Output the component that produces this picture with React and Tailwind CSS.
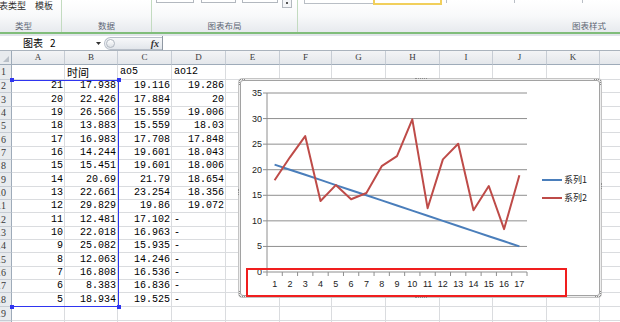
import React from 'react'

// Column widths in px, left to right, after the 12px row header.
const COLS = [
  { k: 'A', w: 'w-[53px]' },
  { k: 'B', w: 'w-[53px]' },
  { k: 'C', w: 'w-[54px]' },
  { k: 'D', w: 'w-[54px]' },
  { k: 'E', w: 'w-[54px]' },
  { k: 'F', w: 'w-[52px]' },
  { k: 'G', w: 'w-[54px]' },
  { k: 'H', w: 'w-[54px]' },
  { k: 'I', w: 'w-[53px]' },
  { k: 'J', w: 'w-[54px]' },
  { k: 'K', w: 'w-[53px]' },
  { k: '', w: 'w-[54px]' }, // L, label is off screen
]

const SERIES1 = [21, 20, 19, 18, 17, 16, 15, 14, 13, 12, 11, 10, 9, 8, 7, 6, 5]
const TIMES = ['17.938', '22.426', '26.566', '13.883', '16.983', '14.244', '15.451', '20.69', '22.661',
  '29.829', '12.481', '22.018', '25.082', '12.063', '16.808', '8.383', '18.934']
const AO5 = ['19.116', '17.884', '15.559', '15.559', '17.708', '19.601', '19.601', '21.79', '23.254',
  '19.86', '17.102', '16.963', '15.935', '14.246', '16.536', '16.836', '19.525']
const AO12 = ['19.286', '20', '19.006', '18.03', '17.848', '18.043', '18.006', '18.654', '18.356', '19.072']

function buildRows() {
  const rows = [{ n: 1, h: 'h-[15px]', cells: [null, { t: '时间', cjk: true }, { t: 'ao5' }, { t: 'ao12' }] }]
  SERIES1.forEach((a, i) => {
    rows.push({
      n: i + 2,
      h: i % 3 === 1 ? 'h-[14px]' : 'h-[13px]',
      cells: [
        { t: String(a), num: true },
        { t: TIMES[i], num: true },
        { t: AO5[i], num: true },
        AO12[i] ? { t: AO12[i], num: true } : { t: '-' },
      ],
    })
  })
  rows.push({ n: 19, h: 'h-[14px]', cells: [] })
  rows.push({ n: 20, h: 'h-[14px]', cells: [] })
  return rows
}

function Cell({ w, v }) {
  return (
    <div className={`${w} shrink-0 flex items-center border-r border-b border-[#dadcdf] overflow-hidden ${v?.num ? 'justify-end pr-[1px]' : 'pl-[2px]'}`}>
      {v && (
        <span className={v.cjk
          ? "font-['Noto_Sans_CJK_SC',sans-serif] text-[11px] leading-none text-black"
          : "font-['Liberation_Mono',monospace] text-[10px] leading-none text-black whitespace-nowrap"}>
          {v.t}
        </span>
      )}
    </div>
  )
}

function RowHead({ n }) {
  return (
    <div className="w-[12px] shrink-0 flex items-center overflow-hidden bg-[#e8ebee] border-r border-[#9eabb9] border-b border-b-[#c6ccd4]">
      <div className="flex w-[6px] shrink-0 justify-end">
        <span className="shrink-0 font-['Liberation_Serif',serif] text-[10px] leading-none text-[#3a3a3a]">{n}</span>
      </div>
    </div>
  )
}

function Sheet() {
  const rows = buildRows()
  return (
    <div>
      <div className="flex h-[14px]">
        <div className="relative w-[12px] shrink-0 bg-[#e8ebee] border-r border-b border-[#9eabb9]">
          <svg className="absolute right-[2px] bottom-[2px]" width="6" height="6" viewBox="0 0 6 6">
            <polygon points="6,0 6,6 0,6" fill="#b9c0c8" />
          </svg>
        </div>
        {COLS.map((c, i) => (
          <div key={i} className={`${c.w} shrink-0 flex items-center justify-center bg-linear-to-b from-[#f3f4f6] to-[#e4e7eb] border-r border-[#c6ccd4] border-b border-b-[#9eabb9] font-['Liberation_Serif',serif] text-[9px] leading-none text-[#3a3a3a]`}>
            {c.k}
          </div>
        ))}
      </div>
      {rows.map((r) => (
        <div key={r.n} className={`flex ${r.h}`}>
          <RowHead n={r.n} />
          {COLS.map((c, i) => <Cell key={i} w={c.w} v={r.cells[i]} />)}
        </div>
      ))}
    </div>
  )
}

function Ribbon() {
  return (
    <div className="flex h-[32px] overflow-hidden bg-linear-to-b from-white via-[#f8f9fa] to-[#e7eaee] font-['Noto_Sans_CJK_SC',sans-serif] text-[#5d6674]">
      <div className="flex w-[62px] shrink-0 flex-col border-r border-[#c3dbc0]">
        <div className="flex h-[19px] gap-[9px] pt-[1px] text-[9px] leading-[10px] text-[#2f2f2f]">
          <span className="-ml-[1px]">表类型</span>
          <span>模板</span>
        </div>
        <div className="pl-[15px] text-[8.5px] leading-[12px]">类型</div>
      </div>
      <div className="flex w-[90px] shrink-0 flex-col border-r border-[#c3dbc0]">
        <div className="h-[19px]" />
        <div className="text-center text-[8.5px] leading-[12px]">数据</div>
      </div>
      <div className="flex w-[146px] shrink-0 flex-col border-r border-[#c3dbc0]">
        <div className="flex h-[19px] items-start pl-[4px]">
          <div className="h-[3px] w-[38px] border-x border-b border-[#b3b8bf] bg-white" />
          <div className="ml-[7px] h-[3px] w-[35px] border-x border-b border-[#b3b8bf] bg-white" />
          <div className="ml-[6px] h-[3px] w-[36px] border-x border-b border-[#b3b8bf] bg-white" />
          <div className="ml-[4px] flex h-[8px] w-[10px] justify-center border-x border-b border-[#b3b8bf] bg-[#f4f5f7]">
            <span className="mt-[2px] h-[2px] w-[2px] bg-[#555]" />
          </div>
        </div>
        <div className="text-center text-[8.5px] leading-[12px]">图表布局</div>
      </div>
      <div className="flex flex-1 flex-col">
        <div className="flex h-[19px] items-start pl-[6px]">
          <div className="h-[4px] w-[69px] border-l border-b border-[#b9bec5] bg-white" />
          <div className="h-[5px] w-[69px] border-x-2 border-b-2 border-[#f1cf5c] bg-white" />
          <div className="ml-[4px] h-[3px] w-[68px] border-l border-[#b9bec5]" />
          <div className="h-[3px] w-[68px] border-l border-[#b9bec5]" />
          <div className="h-[3px] w-[40px] border-l border-[#b9bec5]" />
        </div>
        <div className="pr-[16px] text-right text-[8.5px] leading-[12px]">图表样式</div>
      </div>
    </div>
  )
}

function FormulaBar() {
  return (
    <div className="flex h-[15px] border-b border-[#aab3bd] bg-white">
      <div className="relative flex w-[104px] shrink-0 items-center gap-[7px] pl-[23px] font-['Noto_Sans_CJK_SC',sans-serif] text-[10px] leading-none text-black">
        <span>图表</span>
        <span>2</span>
        <svg className="absolute left-[96px] top-[6px]" width="5" height="3" viewBox="0 0 5 3">
          <polygon points="0,0 5,0 2.5,3" fill="#333" />
        </svg>
      </div>
      <div className="mt-[1px] flex h-[13px] w-[58px] shrink-0 items-center justify-between rounded-l-full border border-r-0 border-[#b8bfc9] bg-linear-to-b from-[#f7f8fa] to-[#e2e6eb] pl-[1px] pr-[3px]">
        <span className="h-[9px] w-[9px] rounded-full border border-[#b0b7c0] bg-linear-to-b from-white to-[#dde1e6]" />
        <span className="font-['Liberation_Serif',serif] text-[10px] font-bold italic leading-none text-[#333]">fx</span>
      </div>
      <div className="flex-1 border-l border-[#8f98a3]" />
    </div>
  )
}

// Plot coordinates are relative to the chart frame's top-left corner.
const X0 = 29
const X1 = 289
const Y0 = 194
const YT = 15
const STEP = (X1 - X0) / 17
const cx = (i) => X0 + (i + 0.5) * STEP
const cy = (v) => Y0 - (v * (Y0 - YT)) / 35

function Handle({ cls }) {
  return <span className={`absolute border-dotted border-[#8c8c8c] ${cls}`} />
}

function Chart() {
  const red = TIMES.map((t, i) => `${cx(i).toFixed(1)},${cy(parseFloat(t)).toFixed(1)}`).join(' ')
  const blue = SERIES1.map((v, i) => `${cx(i).toFixed(1)},${cy(v).toFixed(1)}`).join(' ')
  const grid = [5, 10, 15, 20, 25, 30, 35]
  const labels = [0, 5, 10, 15, 20, 25, 30, 35]

  return (
    <div className="absolute left-[238px] top-[78px] h-[220px] w-[364px]">
      <div className="absolute inset-0 rounded-[4px] border border-[#c4c4c4] bg-[#eeeeee]" />
      <div className="absolute inset-[2px] rounded-[3px] border border-[#a2a2a2] bg-white" />
      <svg className="absolute inset-0" width="364" height="220" viewBox="0 0 364 220">
        {grid.map((v) => (
          <line key={v} x1={X0 - 4} x2={X1} y1={cy(v)} y2={cy(v)} stroke="#8e8e8e" strokeWidth="1" />
        ))}
        <line x1={X0} x2={X0} y1={YT} y2={Y0} stroke="#8e8e8e" strokeWidth="1" />
        <line x1={X0 - 4} x2={X1} y1={Y0} y2={Y0} stroke="#8e8e8e" strokeWidth="1" />
        {Array.from({ length: 18 }, (_, k) => (
          <line key={k} x1={X0 + k * STEP} x2={X0 + k * STEP} y1={Y0} y2={Y0 + 4} stroke="#8e8e8e" strokeWidth="1" />
        ))}
        <g fontFamily="Liberation Sans, Arial, sans-serif" fontSize="9" fill="#222">
          {labels.map((v) => (
            <text key={v} x="24" y={cy(v) + 3} textAnchor="end">{v}</text>
          ))}
          {SERIES1.map((_, i) => (
            <text key={i} x={cx(i)} y="209" textAnchor="middle">{i + 1}</text>
          ))}
        </g>
        <polyline points={blue} fill="none" stroke="#4a7ebb" strokeWidth="2" strokeLinejoin="round" />
        <polyline points={red} fill="none" stroke="#be4b48" strokeWidth="2" strokeLinejoin="round" />
        <rect x="9" y="191" width="319" height="27" fill="none" stroke="#f01e1e" strokeWidth="2" />
        <line x1="304" x2="324" y1="102" y2="102" stroke="#4a7ebb" strokeWidth="2" />
        <line x1="304" x2="324" y1="120" y2="120" stroke="#be4b48" strokeWidth="2" />
      </svg>
      <div className="absolute left-[326px] top-[96px] flex flex-col gap-[6px] font-['Noto_Sans_CJK_SC',sans-serif] text-[9px] leading-[12px] text-[#222]">
        <span>系列1</span>
        <span>系列2</span>
      </div>
      <Handle cls="left-[2px] top-[1px] w-[5px] border-t" />
      <Handle cls="left-[1px] top-[2px] h-[5px] border-l" />
      <Handle cls="left-[177px] top-0 w-[12px] border-t" />
      <Handle cls="right-[3px] top-[1px] w-[5px] border-t" />
      <Handle cls="right-[1px] top-[2px] h-[5px] border-r" />
      <Handle cls="right-0 top-[105px] h-[6px] border-r" />
      <Handle cls="left-0 top-[111px] h-[6px] border-l" />
      <Handle cls="left-[2px] bottom-[1px] w-[5px] border-b" />
      <Handle cls="left-[1px] bottom-[2px] h-[5px] border-l" />
      <Handle cls="left-[177px] bottom-0 w-[12px] border-b" />
      <Handle cls="right-[2px] bottom-[1px] w-[5px] border-b" />
      <Handle cls="right-[1px] bottom-[2px] h-[5px] border-r" />
    </div>
  )
}

export default function App() {
  return (
    <div className="relative h-[322px] w-[620px] overflow-hidden bg-white">
      <Ribbon />
      <div className="h-[2px] bg-[#80bd7a]" />
      <div className="h-[2px] bg-[#e1e5ea]" />
      <FormulaBar />
      <Sheet />
      {/* data range highlight around A2:B18 */}
      <div className="absolute left-[12px] top-[80px] h-[227px] w-[107px] border-t border-r border-b border-[#2f35f0]">
        <span className="absolute -left-[2px] -top-[3px] h-[4px] w-[4px] bg-[#2f35f0]" />
        <span className="absolute -right-[3px] -top-[3px] h-[4px] w-[4px] bg-[#2f35f0]" />
        <span className="absolute -left-[2px] -bottom-[3px] h-[4px] w-[4px] bg-[#2f35f0]" />
        <span className="absolute -right-[3px] -bottom-[3px] h-[4px] w-[4px] bg-[#2f35f0]" />
      </div>
      <Chart />
    </div>
  )
}
